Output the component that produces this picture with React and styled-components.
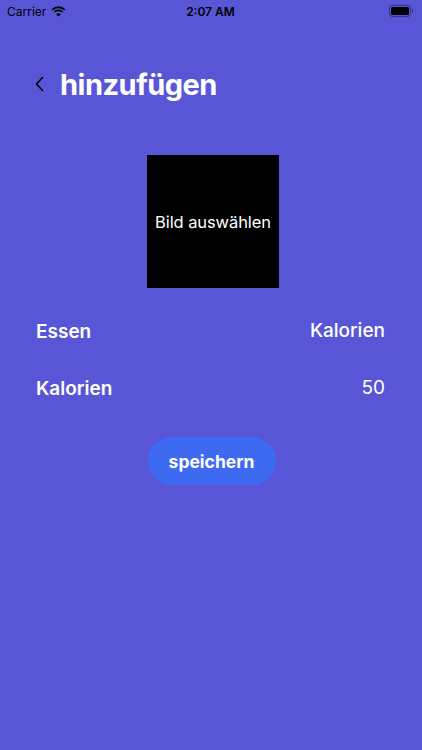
import React from 'react';
import styled, { createGlobalStyle } from 'styled-components';

const GlobalStyle = createGlobalStyle`
  html, body {
    margin: 0;
    padding: 0;
    background: #5856d6;
  }
  body {
    font-family: Inter, "Noto Sans", "Liberation Sans", sans-serif;
    -webkit-font-smoothing: antialiased;
  }
`;

const Screen = styled.div`
  width: 422px;
  height: 750px;
  background: #5856d6;
  color: #fff;
  display: flex;
  flex-direction: column;
  overflow: hidden;
`;

const StatusBar = styled.div`
  height: 22px;
  padding: 0 8px 0 7px;
  display: grid;
  grid-template-columns: 1fr auto 1fr;
  align-items: center;
  color: #000;
  font-size: 12px;
`;

const Carrier = styled.div`
  display: flex;
  align-items: center;
  gap: 5px;
`;

const Clock = styled.div`
  font-weight: 600;
`;

const Battery = styled.div`
  justify-self: end;
  display: flex;
  align-items: center;
`;

const Header = styled.div`
  display: flex;
  align-items: center;
  gap: 16px;
  padding: 43px 0 0 35px;
  height: 38px;
`;

const Title = styled.h1`
  margin: 0;
  font-size: 29px;
  font-weight: 700;
  letter-spacing: -0.5px;
`;

const Picker = styled.div`
  align-self: center;
  margin: 52px 0 0 4px;
  width: 132px;
  height: 133px;
  background: #000;
  display: flex;
  align-items: center;
  justify-content: center;
  font-size: 16.5px;
  letter-spacing: -0.1px;
`;

const Rows = styled.div`
  display: flex;
  flex-direction: column;
  gap: 33px;
  padding: 30px 37px 0 36px;
`;

const Row = styled.div`
  display: flex;
  justify-content: space-between;
  align-items: center;
  height: 24px;
`;

const Label = styled.span`
  font-size: 19px;
  font-weight: 600;
  transform: translateY(${p => p.$shift || 0}px);
`;

const Value = styled.span`
  font-size: 19px;
  font-weight: ${p => (p.$strong ? 500 : 400)};
`;

const SaveButton = styled.button`
  align-self: center;
  margin-top: 38px;
  margin-left: 1px;
  width: 128px;
  height: 48px;
  border: none;
  border-radius: 24px;
  background: #3d6af0;
  color: #fff;
  font-family: inherit;
  font-size: 17.5px;
  font-weight: 700;
`;

function App() {
  return (
    <>
      <GlobalStyle />
      <Screen>
        <StatusBar>
          <Carrier>
            Carrier
            <svg width="15" height="11" viewBox="0 0 15 11">
              <path d="M7.5 2.2c2.2 0 4.2.8 5.7 2.2l1.2-1.2A9.8 9.8 0 0 0 .6 3.2l1.2 1.2a8.2 8.2 0 0 1 5.7-2.2z" fill="#000" />
              <path d="M7.5 5.3c1.3 0 2.5.5 3.5 1.3l1.2-1.2a6.6 6.6 0 0 0-9.4 0L4 6.6a5.1 5.1 0 0 1 3.5-1.3z" fill="#000" />
              <path d="M7.5 10.6l2.3-2.3a3.3 3.3 0 0 0-4.6 0z" fill="#000" />
            </svg>
          </Carrier>
          <Clock>2:07 AM</Clock>
          <Battery>
            <svg width="25" height="12" viewBox="0 0 25 12">
              <rect x="0.5" y="0.5" width="21" height="11" rx="3" fill="none" stroke="#000" strokeOpacity="0.4" />
              <rect x="2" y="2" width="18" height="8" rx="1.5" fill="#000" />
              <path d="M23 4v4c.8-.3 1.3-1.1 1.3-2S23.8 4.3 23 4z" fill="#000" fillOpacity="0.4" />
            </svg>
          </Battery>
        </StatusBar>

        <Header>
          <svg width="9" height="16" viewBox="0 0 9 16">
            <path d="M7.5 1.5L1.5 8l6 6.5" fill="none" stroke="#000" strokeWidth="1.6" strokeLinecap="round" strokeLinejoin="round" />
          </svg>
          <Title>hinzufügen</Title>
        </Header>

        <Picker>Bild auswählen</Picker>

        <Rows>
          <Row>
            <Label $shift={1}>Essen</Label>
            <Value $strong>Kalorien</Value>
          </Row>
          <Row>
            <Label $shift={1}>Kalorien</Label>
            <Value>50</Value>
          </Row>
        </Rows>

        <SaveButton>speichern</SaveButton>
      </Screen>
    </>
  );
}

export default App;
